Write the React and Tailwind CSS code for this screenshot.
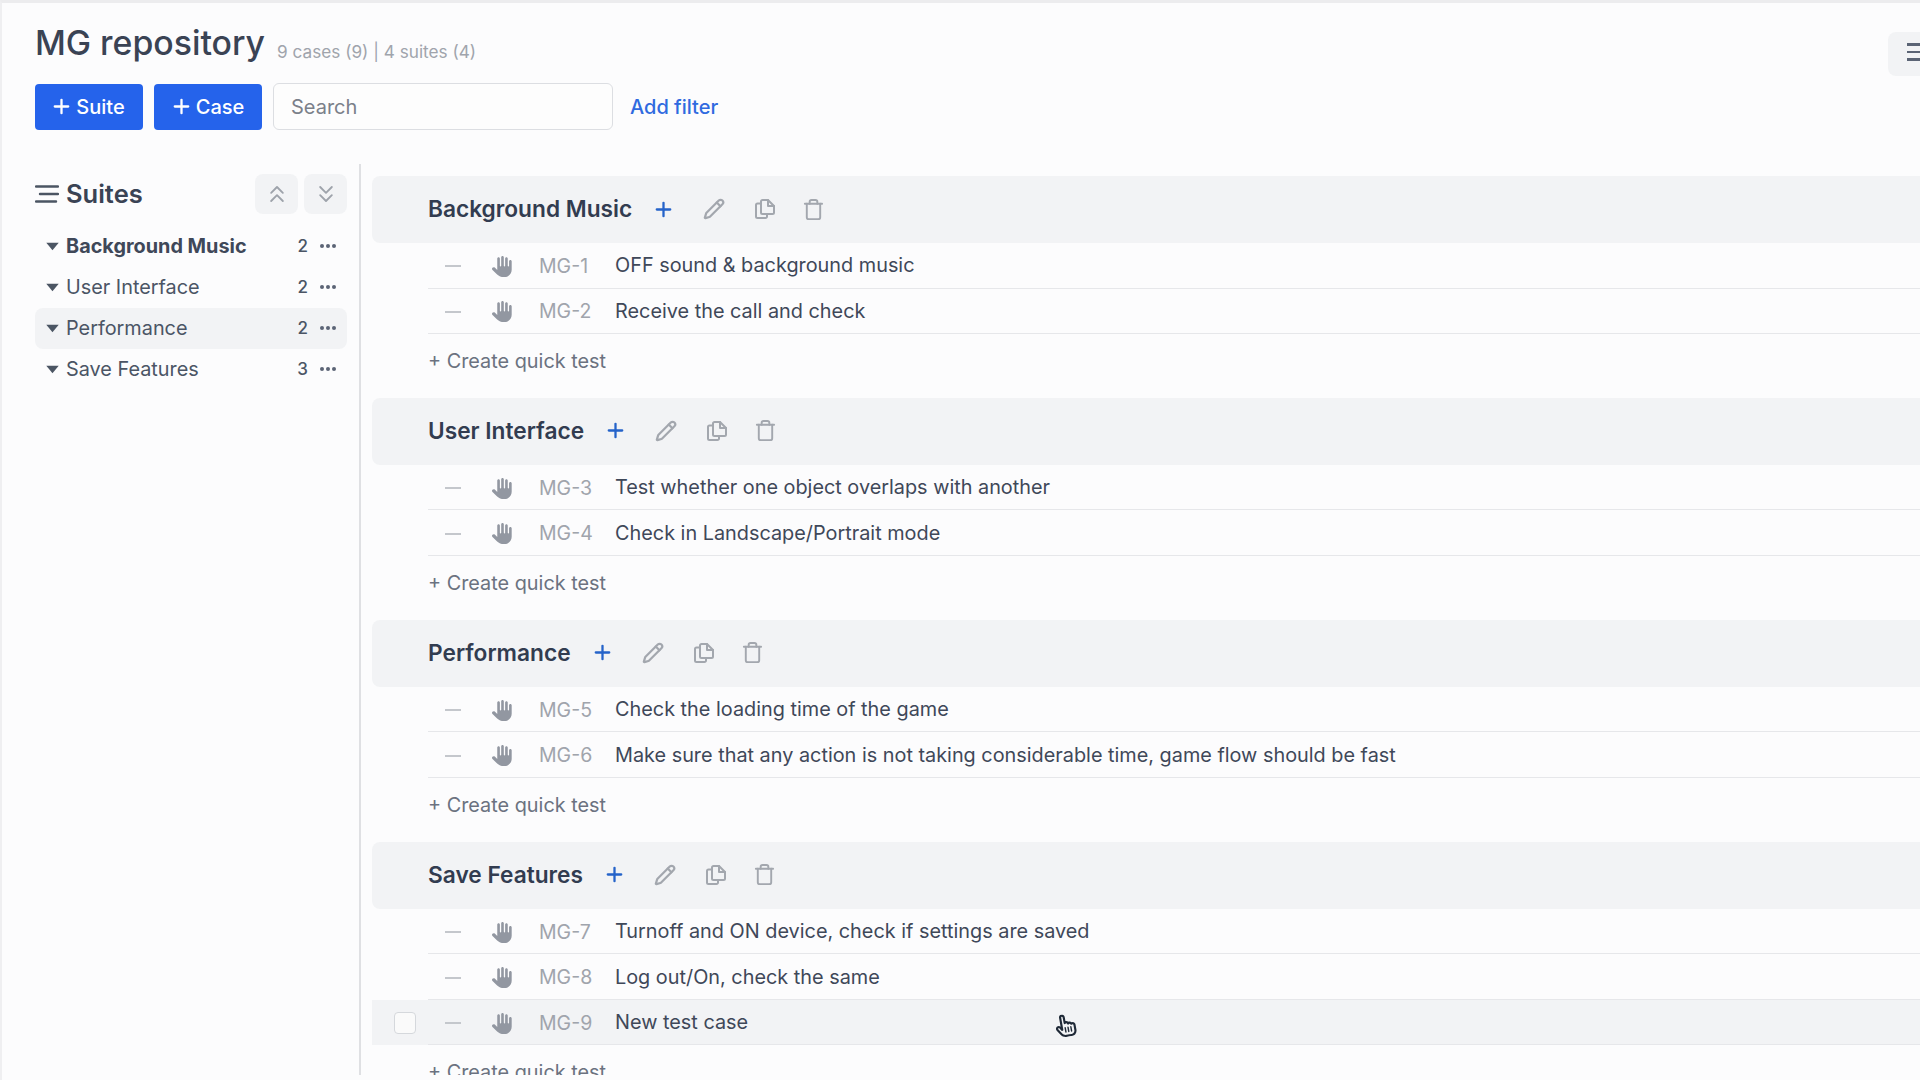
import React from "react";
import { ChevronsUp, ChevronsDown, Plus, Pencil, Trash } from "lucide-react";
import { FaHand, FaRegHandPointer } from "react-icons/fa6";

const suites = [
  { name: "Background Music", count: 2, cases: [["MG-1", "OFF sound & background music"], ["MG-2", "Receive the call and check"]] },
  { name: "User Interface", count: 2, cases: [["MG-3", "Test whether one object overlaps with another"], ["MG-4", "Check in Landscape/Portrait mode"]] },
  { name: "Performance", count: 2, cases: [["MG-5", "Check the loading time of the game"], ["MG-6", "Make sure that any action is not taking considerable time, game flow should be fast"]] },
  { name: "Save Features", count: 3, cases: [["MG-7", "Turnoff and ON device, check if settings are saved"], ["MG-8", "Log out/On, check the same"], ["MG-9", "New test case"]] },
];

function CopyIcon() {
  return (
    <svg width="24" height="24" viewBox="0 0 24 24" fill="none" stroke="#a3a7ae" strokeWidth="2" strokeLinejoin="round" strokeLinecap="round">
      <path d="M8 6.5H4.5a1.5 1.5 0 0 0-1.5 1.5v11.5A1.5 1.5 0 0 0 4.5 21h8a1.5 1.5 0 0 0 1.5-1.5V17" />
      <path d="M15 3H9.5A1.5 1.5 0 0 0 8 4.5v11A1.5 1.5 0 0 0 9.5 17h10a1.5 1.5 0 0 0 1.5-1.5V9z" />
      <path d="M15 3v6h6" />
    </svg>
  );
}

function ListIcon() {
  return (
    <svg width="24" height="20" viewBox="0 0 24 20" fill="none" stroke="#4b5563" strokeWidth="2.4" strokeLinecap="round">
      <path d="M1 2.5h22" />
      <path d="M5 10h18" />
      <path d="M1 17.5h20" />
    </svg>
  );
}

function Caret() {
  return (
    <svg width="13" height="9" viewBox="0 0 13 9" className="shrink-0">
      <path d="M0.3 0.8h12.4L6.5 8.2z" fill="#4b5563" />
    </svg>
  );
}

function CaseRow({ id, title, hovered }) {
  return (
    <div className={`flex h-[45.5px] ${hovered ? "bg-[#f2f3f5]" : ""}`}>
      <div className="w-[56px] shrink-0 flex items-center">
        {hovered && <div className="ml-[22px] w-[22px] h-[22px] rounded border border-[#d5d8dc] bg-[#fafafa]" />}
      </div>
      <div className="flex flex-1 items-center pl-[17px] pt-[2px] border-b border-[#e6e7ea]">
        <div className="w-[16px] h-[2px] bg-[#c4c7cc] shrink-0" />
        <FaHand className="ml-[31px] shrink-0 text-[#9297a1]" size={21} />
        <span className="ml-[26px] w-[76px] shrink-0 text-[19.5px] text-[#a0a4ac]">{id}</span>
        <span className="text-[19.85px] text-[#3f4859]">{title}</span>
      </div>
    </div>
  );
}

function Section({ suite }) {
  return (
    <section className="pb-[25.4px]">
      <div className="flex items-center h-[67px] pl-[56px] bg-[#f2f3f5] rounded-l-lg">
        <h2 className="text-[22.7px] font-semibold text-[#323c50]">{suite.name}</h2>
        <Plus className="ml-[20px] mb-[1px] text-[#2563c9]" size={23} strokeWidth={2.4} />
        <Pencil className="ml-[28px] mb-[1px] text-[#a3a7ae]" size={22} strokeWidth={2.4} />
        <span className="ml-[28px] mb-[1px]"><CopyIcon /></span>
        <Trash className="ml-[25px] mb-[1px] text-[#a3a7ae]" size={23} strokeWidth={2} />
      </div>
      {suite.cases.map(([id, title]) => (
        <CaseRow key={id} id={id} title={title} hovered={id === "MG-9"} />
      ))}
      <div className="pl-[56px] pt-[14.6px] text-[19.85px] leading-[24px] text-[#6b7280]">+ Create quick test</div>
    </section>
  );
}

export default function App() {
  return (
    <div className="relative h-[1080px] w-full overflow-hidden bg-[#fcfcfd] border-t-[3px] border-l-2 border-t-[#ececee] border-l-[#efeff1] font-['Inter',sans-serif]">
      <header className="h-[161px] pl-[33px] pt-[17px]">
        <div className="flex items-start justify-between">
          <div className="flex items-center">
            <h1 className="text-[33.8px] leading-[46px] font-medium text-[#3a4354]">MG repository</h1>
            <span className="ml-[12px] mt-[18px] text-[17.2px] text-[#a0a4ac]">9 cases (9) | 4 suites (4)</span>
          </div>
          <div className="flex items-center w-[32px] h-[44px] mt-[12px] pl-[19px] bg-[#f2f3f5] rounded-l-lg overflow-hidden shrink-0">
            <div className="flex flex-col gap-[5px] w-[20px] shrink-0 mb-[4px]">
              <div className="h-[2.5px] bg-[#5b6475]" />
              <div className="h-[2.5px] bg-[#5b6475]" />
              <div className="h-[2.5px] bg-[#5b6475]" />
            </div>
          </div>
        </div>
        <div className="flex items-center mt-[7px]">
          <button className="flex items-center justify-center gap-[3px] w-[108px] h-[46px] pr-[3px] rounded bg-[#2563eb] text-white text-[20px] font-medium">
            <Plus size={23} strokeWidth={2.4} />Suite
          </button>
          <button className="flex items-center justify-center gap-[3px] w-[108px] h-[46px] ml-[11px] pr-[2px] rounded bg-[#2563eb] text-white text-[20px] font-medium">
            <Plus size={23} strokeWidth={2.4} />Case
          </button>
          <div className="flex items-center w-[340px] h-[47px] ml-[11px] pl-[17px] rounded-md border border-[#dcdee2] bg-[#fdfdfd] text-[20px] text-[#7b808a]">Search</div>
          <span className="ml-[17px] text-[20px] font-medium text-[#2f6ae0]">Add filter</span>
        </div>
      </header>
      <main className="flex h-[911px] overflow-hidden">
        <aside className="w-[326px] ml-[33px] shrink-0 pr-[12px] pt-[10px] border-r-2 border-[#dfe0e3]">
          <div className="flex items-center h-[40px]">
            <ListIcon />
            <span className="ml-[7px] text-[25.5px] font-semibold text-[#3a4354] flex-1">Suites</span>
            <div className="flex items-center justify-center w-[43px] h-[40px] rounded-lg bg-[#f2f3f5] text-[#9ea3ab]"><ChevronsUp size={28} strokeWidth={1.6} /></div>
            <div className="flex items-center justify-center w-[43px] h-[40px] ml-[6px] rounded-lg bg-[#f2f3f5] text-[#9ea3ab]"><ChevronsDown size={28} strokeWidth={1.6} /></div>
          </div>
          <ul className="mt-[12px]">
            {suites.map((s, i) => (
              <li key={s.name} className={`flex items-center h-[41px] pl-[11px] pr-[11px] rounded-lg ${i === 2 ? "bg-[#f2f3f5]" : ""}`}>
                <Caret />
                <span className={`ml-[7px] flex-1 text-[19.85px] ${i === 0 ? "font-bold text-[#3f4859]" : "text-[#4b5565]"}`}>{s.name}</span>
                <span className="text-[17px] font-medium text-[#4b5565]">{s.count}</span>
                <div className="flex gap-[2px] ml-[12px] mb-[2px]">
                  <i className="w-[4px] h-[4px] rounded-full bg-[#5b6475]" />
                  <i className="w-[4px] h-[4px] rounded-full bg-[#5b6475]" />
                  <i className="w-[4px] h-[4px] rounded-full bg-[#5b6475]" />
                </div>
              </li>
            ))}
          </ul>
        </aside>
        <div className="flex-1 pl-[11px] pt-[12px]">
          {suites.map((s) => <Section key={s.name} suite={s} />)}
        </div>
      </main>
      <FaRegHandPointer className="absolute left-[1052px] top-[1011px] text-[#1f2937] rotate-[-10deg]" size={23} />
    </div>
  );
}
